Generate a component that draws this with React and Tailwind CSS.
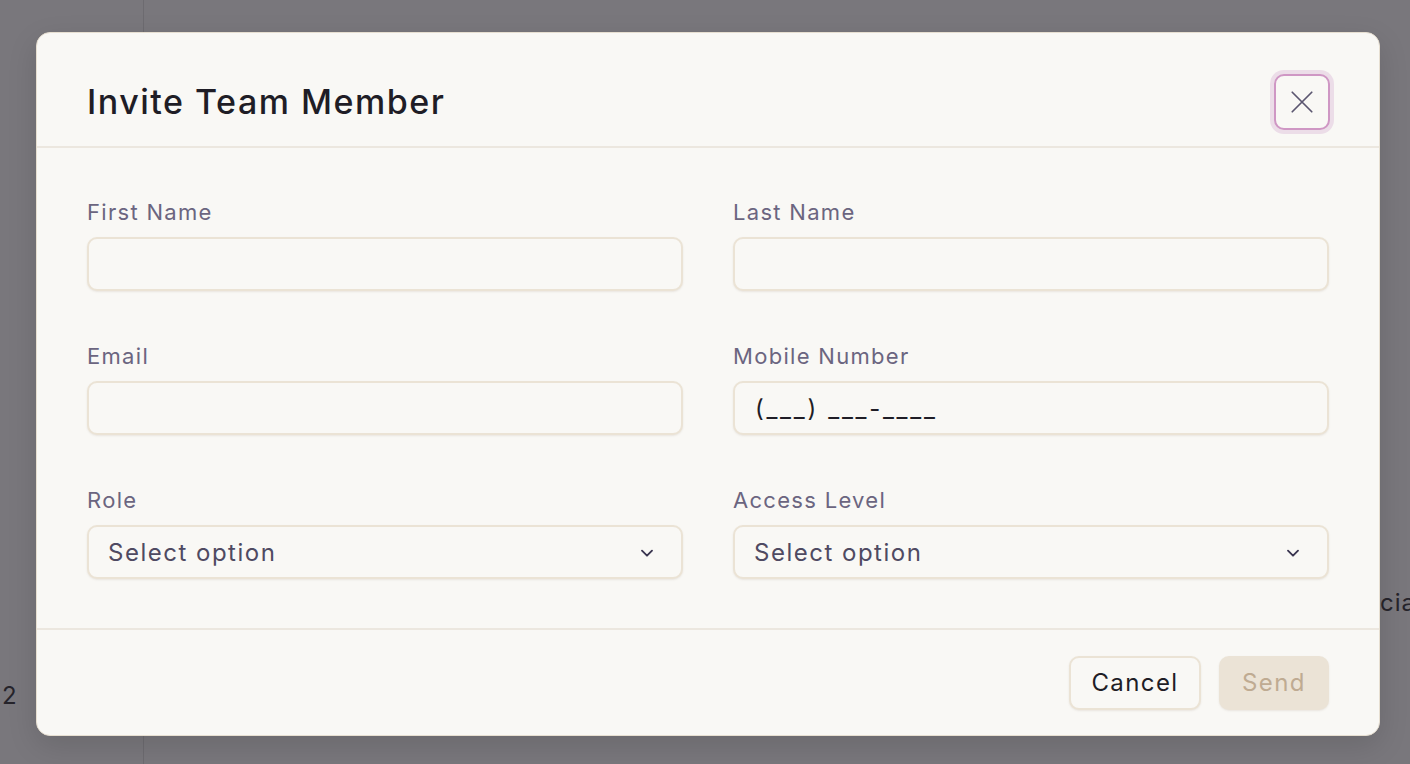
import React from "react";

function Field({ label, children }) {
  return (
    <div className="flex flex-col">
      <label className="h-[24px] leading-[24px] text-[22px] text-[#6b6580] mb-[13px] tracking-[1.3px]">{label}</label>
      {children}
    </div>
  );
}

function TextInput({ value }) {
  return (
    <div className="h-[54px] rounded-[10px] border-2 border-[#ebe3d5] bg-[#f9f8f5] shadow-[0_1px_2px_rgba(120,100,70,0.12)] flex items-center pl-[20px] pr-[20px] pt-[2px] text-[24px] text-[#1f1d26] tracking-[2.7px]">
      {value}
    </div>
  );
}

function Select() {
  return (
    <div className="h-[54px] rounded-[10px] border-2 border-[#ebe3d5] bg-[#f9f8f5] shadow-[0_1px_2px_rgba(120,100,70,0.12)] flex items-center justify-between pl-[19px] pr-[26px] pt-[2px] text-[24px] text-[#4f4a62] tracking-[1.5px]">
      <span>Select option</span>
      <svg width="16" height="16" viewBox="0 0 24 24" fill="none" stroke="#3a3550" strokeWidth="2.8" strokeLinecap="round" strokeLinejoin="round">
        <path d="M4.5 8.5l7.5 7.5 7.5-7.5" />
      </svg>
    </div>
  );
}

export default function App() {
  return (
    <div className="relative w-[1410px] h-[764px] overflow-hidden bg-[#79777c]" style={{ fontFamily: "Inter, 'Noto Sans', sans-serif" }}>
      <div className="flex h-full">
        <div className="w-[144px] h-full border-r border-[#6d6b70] flex flex-col justify-end pb-[50px]">
          <span className="text-[24px] text-[#26242b] pl-[2px]">2</span>
        </div>
        <div className="flex-1 relative">
          <span className="absolute left-[1236px] top-[585px] text-[24px] text-[#26242b] tracking-[1px]">cial</span>
        </div>
      </div>

      <div className="absolute left-[36px] top-[32px] w-[1344px] h-[704px] rounded-[14px] border border-[#e7dfd1] bg-[#f9f8f5] shadow-[0_10px_30px_rgba(0,0,0,0.12)] flex flex-col">
        <div className="flex items-center justify-between pl-[50px] pr-[49px] pt-[41px] pb-[16px] border-b-2 border-[#ece7df]">
          <h2 className="text-[34px] font-medium text-[#1f1d26] tracking-[1.5px] leading-none">Invite Team Member</h2>
          <button className="w-[56px] h-[56px] rounded-[10px] border-2 border-[#cf97c4] ring-4 ring-[#ecdde8] flex items-center justify-center bg-[#f9f8f5]">
            <svg width="26" height="26" viewBox="0 0 24 24" fill="none" stroke="#5b5670" strokeWidth="1.6" strokeLinecap="round">
              <path d="M3 3l18 18M21 3L3 21" />
            </svg>
          </button>
        </div>

        <div className="flex-1 px-[50px] pt-[52px] grid grid-cols-2 gap-x-[50px] gap-y-[53px] content-start border-b-2 border-[#ece7df]">
          <Field label="First Name"><TextInput value="" /></Field>
          <Field label="Last Name"><TextInput value="" /></Field>
          <Field label="Email"><TextInput value="" /></Field>
          <Field label="Mobile Number"><TextInput value="(___) ___-____" /></Field>
          <Field label="Role"><Select /></Field>
          <Field label="Access Level"><Select /></Field>
        </div>

        <div className="h-[105px] flex items-center justify-end gap-[18px] pr-[50px]">
          <button className="h-[54px] w-[132px] rounded-[10px] border-2 border-[#ebe3d5] bg-[#f9f8f5] shadow-[0_1px_2px_rgba(120,100,70,0.12)] text-[24px] text-[#1f1d26] tracking-[1.4px]">Cancel</button>
          <button className="h-[54px] w-[110px] rounded-[10px] bg-[#ebe3d6] shadow-[0_1px_2px_rgba(120,100,70,0.12)] text-[24px] text-[#bfab92] tracking-[1.4px]">Send</button>
        </div>
      </div>
    </div>
  );
}
